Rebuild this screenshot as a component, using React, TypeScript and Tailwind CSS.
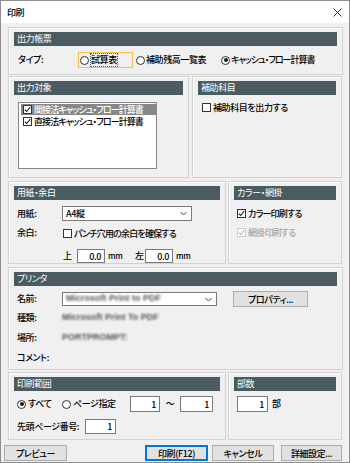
import React from "react";

const FONT = "font-['Noto_Sans_CJK_JP',sans-serif] [font-feature-settings:'palt'] tracking-[-0.4px] font-medium";

function Header({ children }: { children: React.ReactNode }) {
  return (
    <div className="h-[14px] bg-[#4b5b62] text-white text-[9px] leading-[14px] pl-[3px] whitespace-nowrap font-normal">
      {children}
    </div>
  );
}

function Panel({
  className = "",
  title,
  children,
}: {
  className?: string;
  title: string;
  children?: React.ReactNode;
}) {
  return (
    <div
      className={`border border-[#d2d2d2] shadow-[inset_1px_1px_0_#ffffff] px-[5px] pt-[4px] shrink-0 ${className}`}
    >
      <Header>{title}</Header>
      {children}
    </div>
  );
}

function Radio({ checked = false }: { checked?: boolean }) {
  return (
    <span className="w-[9px] h-[9px] rounded-full border border-[#333333] bg-white flex items-center justify-center shrink-0">
      {checked && <span className="w-[4px] h-[4px] rounded-full bg-[#1a1a1a]" />}
    </span>
  );
}

function Check({ checked = false, disabled = false }: { checked?: boolean; disabled?: boolean }) {
  return (
    <span
      className={`w-[9px] h-[9px] border ${
        disabled ? "border-[#cccccc]" : "border-[#333333]"
      } bg-white flex items-center justify-center shrink-0`}
    >
      {checked && (
        <svg width="7" height="7" viewBox="0 0 7 7">
          <path
            d="M0.8 3.6 L2.7 5.5 L6.3 1.2"
            stroke={disabled ? "#b8b8b8" : "#222222"}
            strokeWidth="1.1"
            fill="none"
          />
        </svg>
      )}
    </span>
  );
}

function NumInput({ value, className = "" }: { value: string; className?: string }) {
  return (
    <div
      className={`bg-white border border-[#7a7a7a] text-[9px] leading-none flex items-center justify-end pr-[3px] shrink-0 ${className}`}
    >
      {value}
    </div>
  );
}

function Chevron() {
  return (
    <svg width="7" height="5" viewBox="0 0 7 5" className="shrink-0">
      <path d="M0.5 1 L3.5 4 L6.5 1" stroke="#444444" strokeWidth="1" fill="none" />
    </svg>
  );
}

function Button({
  children,
  className = "",
  focused = false,
}: {
  children: React.ReactNode;
  className?: string;
  focused?: boolean;
}) {
  return (
    <div
      className={`h-[16px] bg-[#e1e1e1] border ${
        focused ? "border-[#0078d7] shadow-[inset_0_0_0_1px_#0078d7]" : "border-[#adadad]"
      } text-[9px] leading-none flex items-center justify-center shrink-0 whitespace-nowrap ${className}`}
    >
      {children}
    </div>
  );
}

function Blur({ children }: { children: React.ReactNode }) {
  return (
    <span className="text-[#555555] blur-[1.2px] text-[9px] whitespace-nowrap font-['Liberation_Sans',sans-serif] font-bold tracking-normal">
      {children}
    </span>
  );
}

export default function App() {
  return (
    <div className={`w-[350px] h-[463px] bg-[#f0f0f0] border border-[#8e8e8e] flex flex-col text-black ${FONT}`}>
      {/* Title bar */}
      <div className="h-[22px] bg-white flex items-center justify-between pl-[6px] pr-[7px] shrink-0">
        <span className="text-[9px] leading-none">印刷</span>
        <svg width="9" height="9" viewBox="0 0 9 9">
          <path d="M0.5 0.5 L8.5 8.5 M8.5 0.5 L0.5 8.5" stroke="#222222" strokeWidth="0.9" />
        </svg>
      </div>

      {/* Body */}
      <div className="flex flex-col pl-[7px] pr-[6px] pt-[4px] text-[9px]">
        {/* 出力帳票 */}
        <Panel title="出力帳票" className="h-[48px]">
          <div className="flex items-center h-[16px] mt-[6px] pl-[4px] whitespace-nowrap">
            <span className="w-[60px] shrink-0">タイプ:</span>
            <div className="w-[55px] h-[16px] border border-[#f2c14e] flex items-center pl-[1px] gap-[1px] shrink-0">
              <Radio />
              <span className="px-[1px] outline outline-1 outline-dotted outline-[#555] -outline-offset-1">試算表</span>
            </div>
            <div className="w-[85px] flex items-center gap-[1px] ml-[3px] shrink-0">
              <Radio />
              <span>補助残高一覧表</span>
            </div>
            <div className="flex items-center gap-[1px]">
              <Radio checked />
              <span className="tracking-[-1px]">キャッシュ・フロー計算書</span>
            </div>
          </div>
        </Panel>

        {/* Row 2 */}
        <div className="flex mt-[1px] gap-[3px]">
          <Panel title="出力対象" className="w-[181px] h-[102px]">
            <div className="ml-[4px] mt-[7px] w-[139px] h-[67px] bg-white border border-[#828790] pt-[1px] pl-[2px]">
              <div className="h-[11px] bg-[#878787] text-white flex items-center pl-[2px] gap-[2px] whitespace-nowrap">
                <Check checked />
                <span className="leading-none tracking-[-0.9px]">間接法キャッシュ・フロー計算書</span>
              </div>
              <div className="h-[11px] mt-[1px] flex items-center pl-[2px] gap-[2px] whitespace-nowrap">
                <Check checked />
                <span className="leading-none tracking-[-0.9px]">直接法キャッシュ・フロー計算書</span>
              </div>
            </div>
          </Panel>
          <Panel title="補助科目" className="w-[150px] h-[102px]">
            <div className="ml-[4px] mt-[8px] flex items-center gap-[2px] whitespace-nowrap">
              <Check />
              <span className="leading-none">補助科目を出力する</span>
            </div>
          </Panel>
        </div>

        {/* Row 3 */}
        <div className="flex mt-[3px] gap-[2px]">
          <Panel title="用紙・余白" className="w-[218px] h-[83px]">
            <div className="flex items-center mt-[6px] pl-[3px] h-[15px]">
              <span className="w-[45px] shrink-0">用紙:</span>
              <div className="w-[130px] h-[15px] bg-white border border-[#7a7a7a] flex items-center justify-between pl-[3px] pr-[4px]">
                <span className="leading-none">A4縦</span>
                <Chevron />
              </div>
            </div>
            <div className="flex items-center mt-[6px] pl-[3px] h-[12px] whitespace-nowrap">
              <span className="w-[46px] shrink-0">余白:</span>
              <Check />
              <span className="ml-[2px] leading-none tracking-[-0.8px]">パンチ穴用の余白を確保する</span>
            </div>
            <div className="flex items-center mt-[10px] pl-[49px] h-[14px] whitespace-nowrap">
              <span className="w-[14px] shrink-0">上</span>
              <NumInput value="0.0" className="w-[28px] h-[14px]" />
              <span className="ml-[3px] w-[27px] shrink-0 text-[8px]">mm</span>
              <span className="w-[12px] shrink-0">左</span>
              <NumInput value="0.0" className="w-[28px] h-[14px] ml-[-2px]" />
              <span className="ml-[3px] text-[8px]">mm</span>
            </div>
          </Panel>
          <Panel title="カラー・網掛" className="w-[114px] h-[83px]">
            <div className="ml-[3px] mt-[9px] flex items-center gap-[2px] whitespace-nowrap">
              <Check checked />
              <span className="leading-none tracking-[-0.8px]">カラー印刷する</span>
            </div>
            <div className="ml-[3px] mt-[10px] flex items-center gap-[2px] whitespace-nowrap text-[#a8a8a8]">
              <Check checked disabled />
              <span className="leading-none tracking-[-0.8px]">網掛印刷する</span>
            </div>
          </Panel>
        </div>

        {/* プリンタ */}
        <Panel title="プリンタ" className="h-[103px] mt-[3px]">
          <div className="flex items-start mt-[5px] pl-[3px] h-[15px]">
            <span className="w-[45px] shrink-0 mt-[3px] leading-none">名前:</span>
            <div className="w-[155px] h-[14px] mt-[1px] bg-white border border-[#7a7a7a] flex items-center justify-between pl-[3px] pr-[4px]">
              <Blur>Microsoft Print to PDF</Blur>
              <Chevron />
            </div>
            <Button className="w-[75px] ml-[16px] h-[15px]">プロパティ...</Button>
          </div>
          <div className="flex items-center mt-[2px] pl-[3px] h-[20px]">
            <span className="w-[45px] shrink-0">種類:</span>
            <Blur>Microsoft Print To PDF</Blur>
          </div>
          <div className="flex items-center pl-[3px] h-[20px]">
            <span className="w-[45px] shrink-0">場所:</span>
            <Blur>PORTPROMPT:</Blur>
          </div>
          <div className="flex items-center pl-[3px] h-[19px]">
            <span className="w-[45px] shrink-0">コメント:</span>
          </div>
        </Panel>

        {/* Row 5 */}
        <div className="flex mt-[2px] gap-[2px]">
          <Panel title="印刷範囲" className="w-[218px] h-[68px]">
            <div className="flex items-center mt-[5px] pl-[3px] h-[16px] whitespace-nowrap">
              <Radio checked />
              <span className="ml-[2px] w-[34px] shrink-0">すべて</span>
              <Radio />
              <span className="ml-[2px] w-[57px] shrink-0">ページ指定</span>
              <NumInput value="1" className="w-[30px] h-[16px]" />
              <span className="w-[20px] text-center shrink-0">～</span>
              <NumInput value="1" className="w-[33px] h-[16px]" />
            </div>
            <div className="flex items-center mt-[7px] pl-[3px] h-[15px] whitespace-nowrap">
              <span className="w-[68px] shrink-0">先頭ページ番号:</span>
              <NumInput value="1" className="w-[31px] h-[15px]" />
            </div>
          </Panel>
          <Panel title="部数" className="w-[114px] h-[68px]">
            <div className="flex items-center mt-[5px] ml-[3px] h-[16px]">
              <NumInput value="1" className="w-[31px] h-[16px]" />
              <span className="ml-[4px]">部</span>
            </div>
          </Panel>
        </div>

        {/* Buttons */}
        <div className="flex mt-[5px] ml-[-4px]">
          <Button className="w-[63px]">プレビュー</Button>
          <Button className="w-[63px] ml-[78px]" focused>
            印刷(F12)
          </Button>
          <Button className="w-[62px] ml-[4px]">キャンセル</Button>
          <Button className="w-[61px] ml-[7px]">詳細設定...</Button>
        </div>
      </div>
    </div>
  );
}
